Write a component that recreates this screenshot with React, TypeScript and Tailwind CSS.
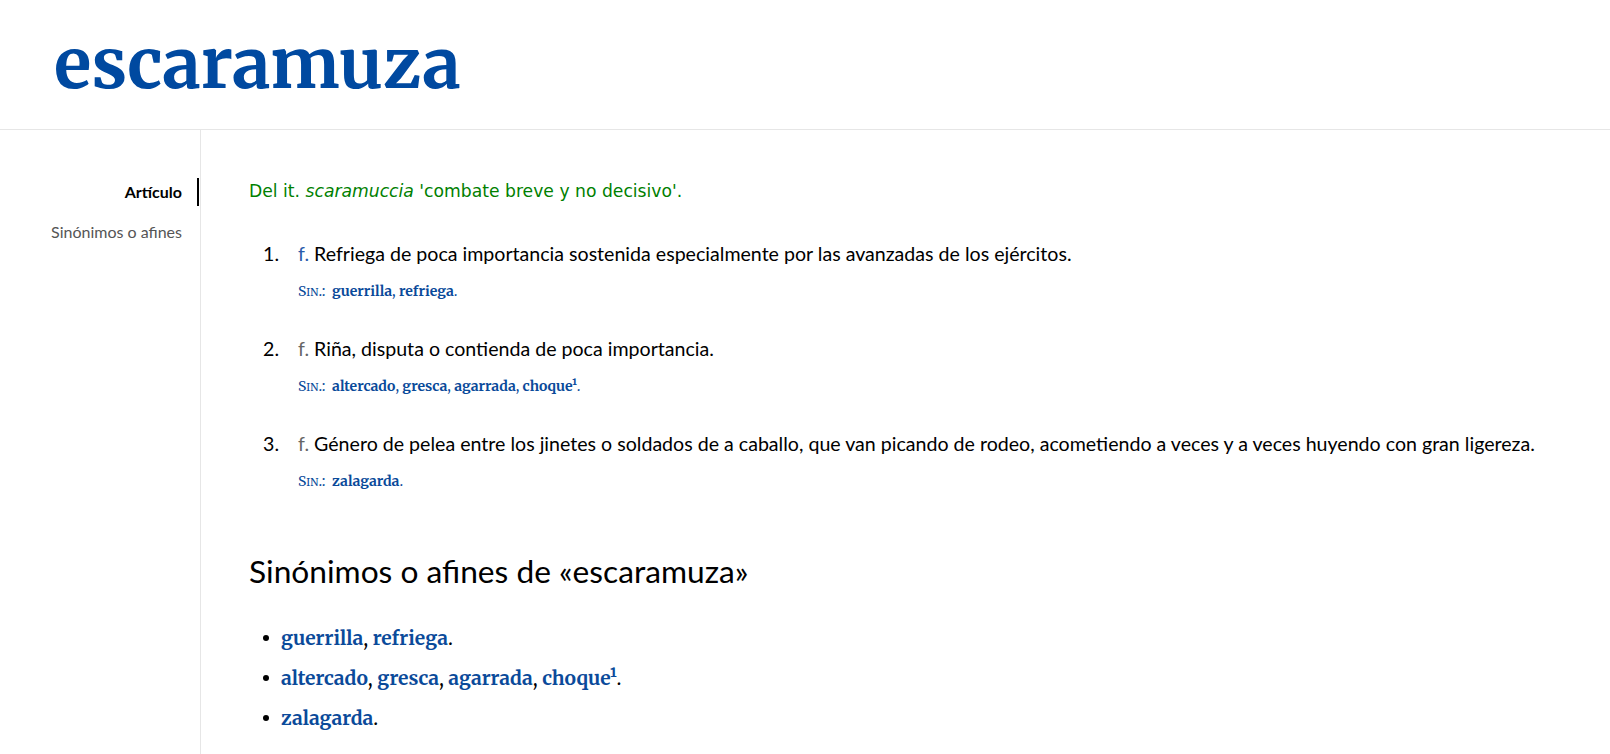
const serif = "font-['Merriweather','DejaVu_Serif',serif]";

type Sense = { n: number; text: string; syn: { w: string; sup?: string }[] };

const senses: Sense[] = [
  {
    n: 1,
    text: "Refriega de poca importancia sostenida especialmente por las avanzadas de los ejércitos.",
    syn: [{ w: "guerrilla" }, { w: "refriega" }],
  },
  {
    n: 2,
    text: "Riña, disputa o contienda de poca importancia.",
    syn: [{ w: "altercado" }, { w: "gresca" }, { w: "agarrada" }, { w: "choque", sup: "¹" }],
  },
  {
    n: 3,
    text: "Género de pelea entre los jinetes o soldados de a caballo, que van picando de rodeo, acometiendo a veces y a veces huyendo con gran ligereza.",
    syn: [{ w: "zalagarda" }],
  },
];

function SynList({ syn }: { syn: Sense["syn"] }) {
  return (
    <>
      {syn.map((s, i) => (
        <span key={s.w}>
          <a className="font-bold text-[#0a4a9a]">
            {s.w}
            {s.sup}
          </a>
          {i < syn.length - 1 ? ", " : ""}
        </span>
      ))}
    </>
  );
}

export default function App() {
  return (
    <div className="min-h-screen bg-white text-black font-['Lato',sans-serif]">
      <header className="h-[130px] border-b border-[#e6e6e6] pl-[54px] pt-[24px]">
        <h1 className={`${serif} text-[69px] font-bold leading-[80px] text-[#0049a0]`}>escaramuza</h1>
      </header>

      <div className="flex">
        <aside className="w-[201px] shrink-0 border-r border-[#e6e6e6] pt-[48px] min-h-[624px]">
          <ul className="text-right text-[16px]">
            <li className="pr-[15px] mr-[1px] border-r-2 border-black leading-[28px] font-bold">Artículo</li>
            <li className="pr-[18px] mt-[14px] leading-[24px] text-[#555]">Sinónimos o afines</li>
          </ul>
        </aside>

        <main className="pl-[48px] pt-[49px]">
          <p className="font-['DejaVu_Sans',sans-serif] text-[17.2px] text-[#008000] leading-[24px]">
            Del it. <i>scaramuccia</i> 'combate breve y no decisivo'.
          </p>

          <ol className="mt-[38px] flex flex-col gap-[33px]">
            {senses.map((s) => (
              <li key={s.n} className="flex">
                <span className="w-[49px] pl-[14px] text-[19.6px] leading-[26px]">{s.n}.</span>
                <div>
                  <p className="text-[19.6px] leading-[26px]">
                    <abbr className={`no-underline ${s.n === 1 ? "text-[#2a5cab]" : "text-[#666]"}`}>f.</abbr> {s.text}
                  </p>
                  <p className={`${serif} mt-[14px] text-[14px] leading-[20px] text-[#0a4a9a]`}>
                    <span>
                      S<span className="text-[10.5px]">IN</span>.
                    </span>
                    :&nbsp; <SynList syn={s.syn} />.
                  </p>
                </div>
              </li>
            ))}
          </ol>

          <h2 className="mt-[58px] text-[31.7px] leading-[40px]">Sinónimos o afines de «escaramuza»</h2>

          <ul className={`${serif} mt-[33px] flex flex-col gap-[12px] text-[19.2px] leading-[28px]`}>
            {senses.map((s) => (
              <li key={s.n} className="flex items-center">
                <span className="w-[32px] pl-[14px] flex items-center">
                  <span className="block w-[6px] h-[6px] rounded-full bg-black" />
                </span>
                <span>
                  <SynList syn={s.syn} />.
                </span>
              </li>
            ))}
          </ul>
        </main>
      </div>
    </div>
  );
}
